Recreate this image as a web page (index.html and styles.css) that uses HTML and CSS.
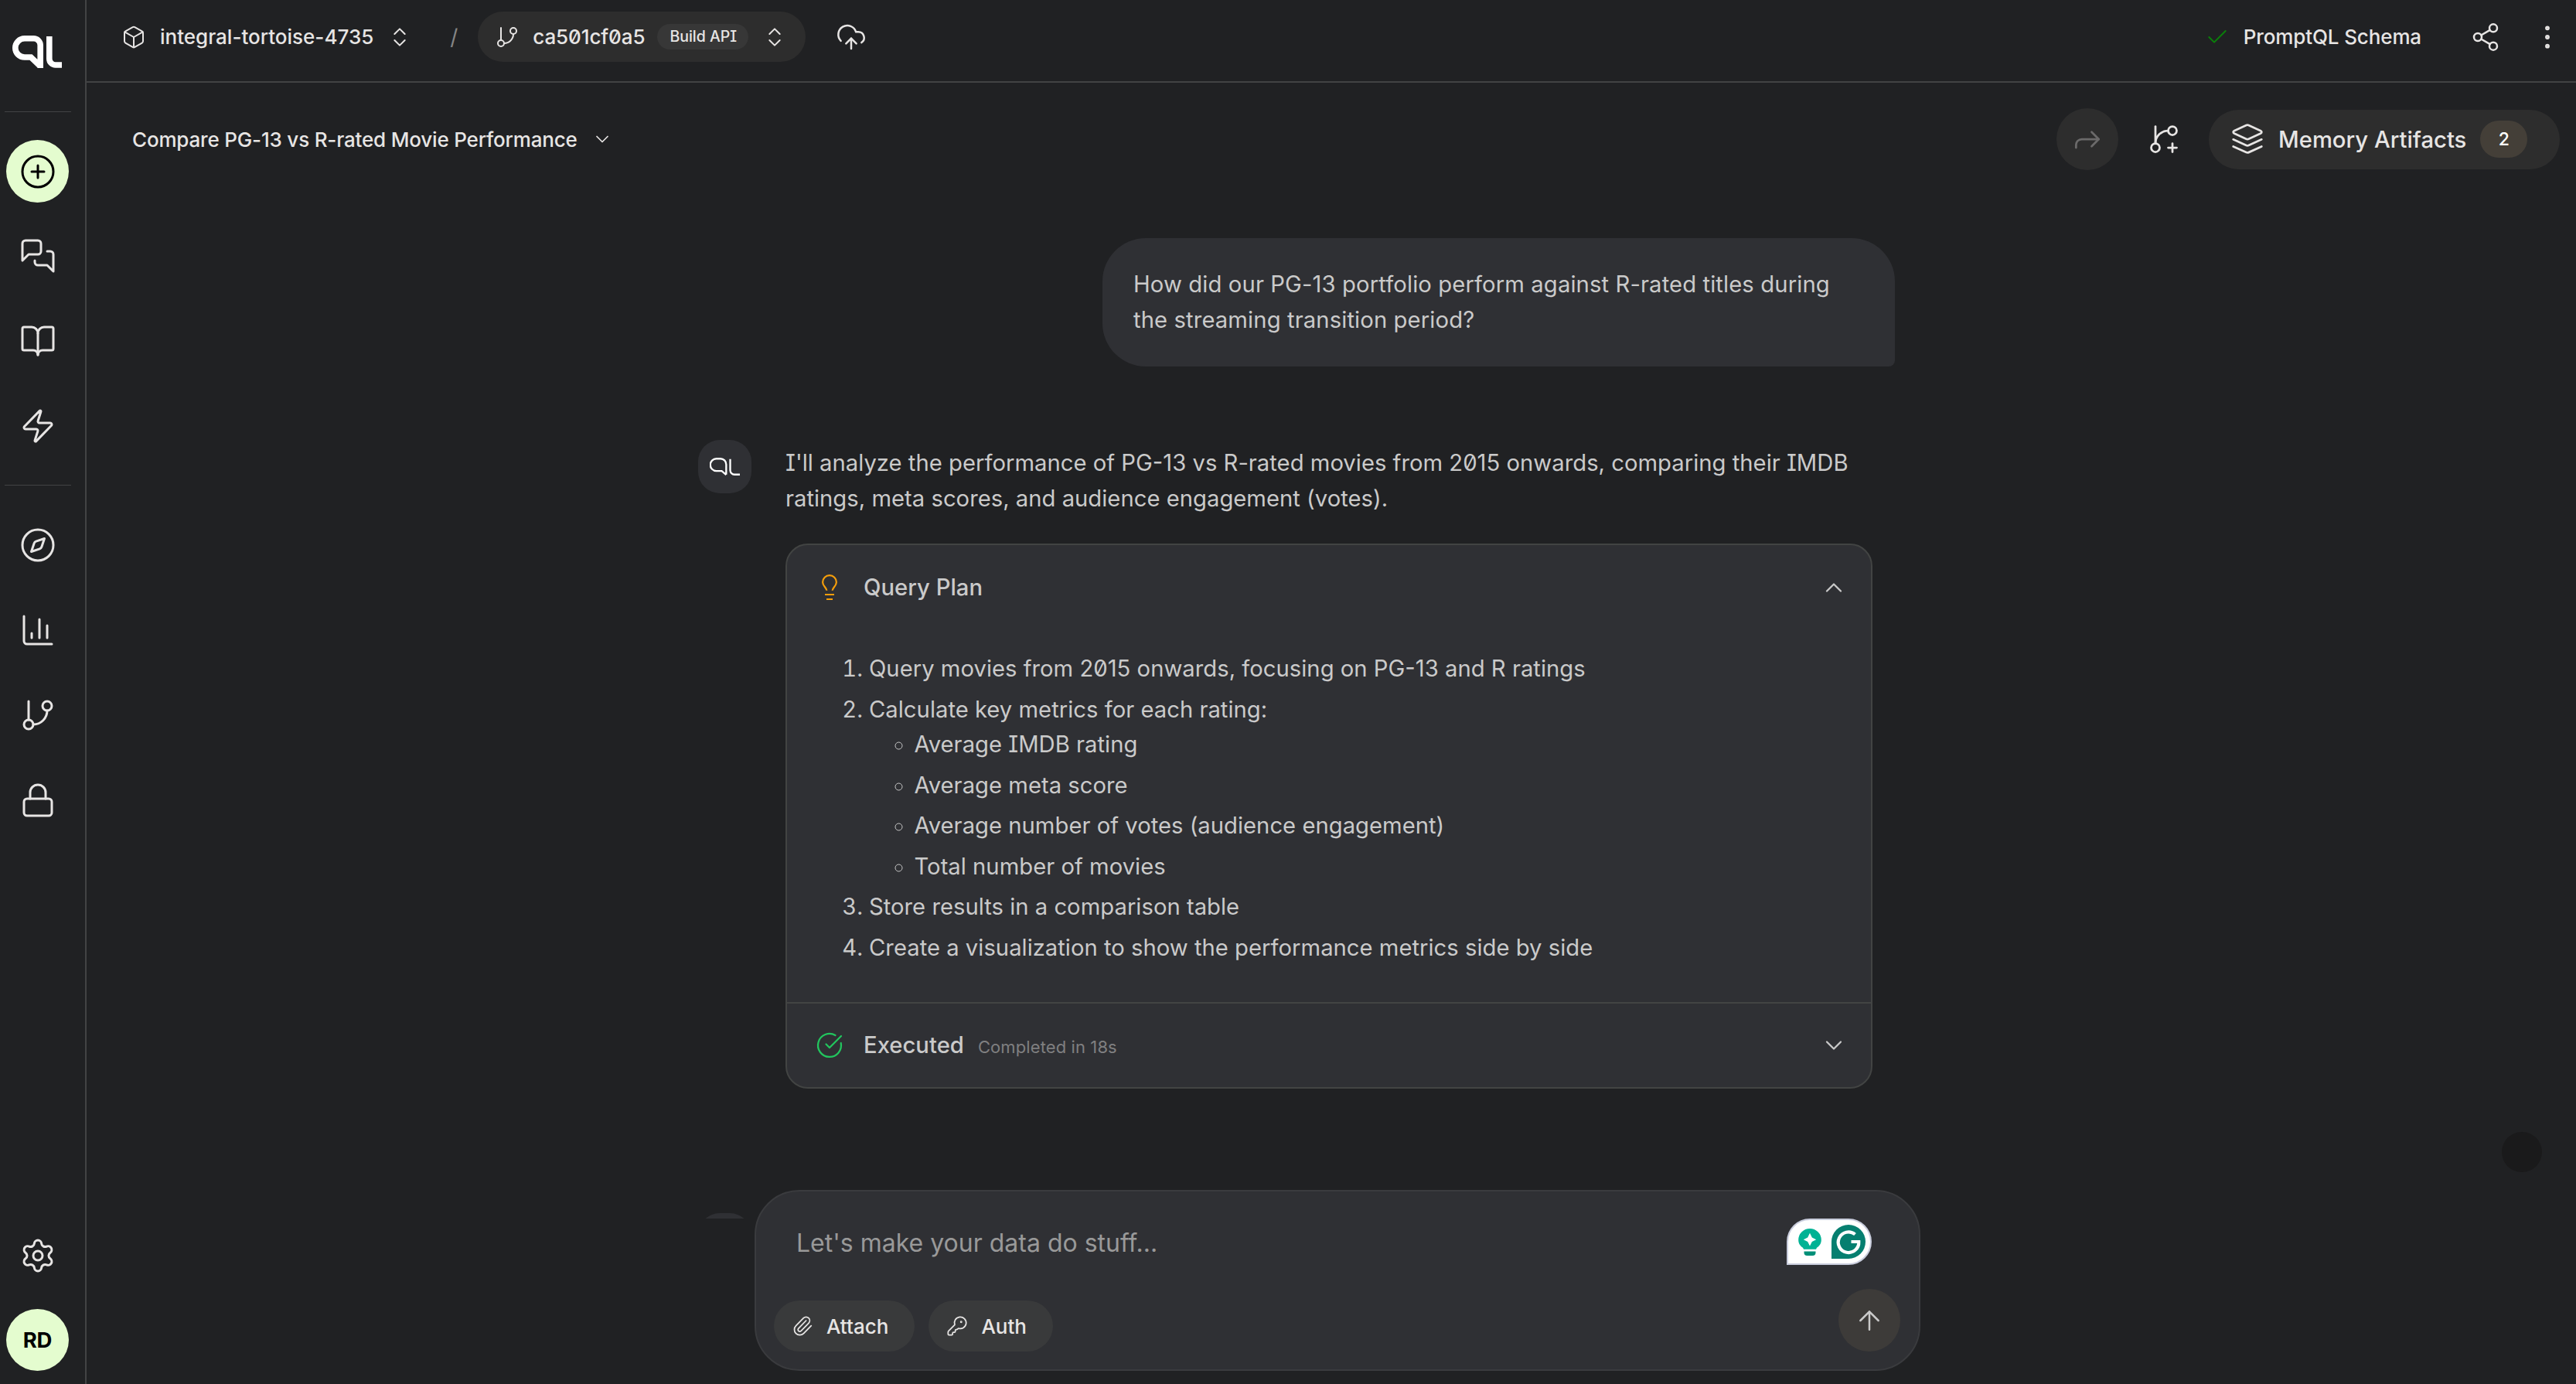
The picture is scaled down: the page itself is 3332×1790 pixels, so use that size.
FILE: index.html
```html
<!doctype html>
<html lang="en">
<head>
  <meta charset="utf-8">
  <meta name="viewport" content="width=device-width, initial-scale=1">
  <title>PromptQL - Compare PG-13 vs R-rated Movie Performance</title>
  <link rel="stylesheet" href="styles.css">
</head>
<body>

<nav class="sidebar">
  <svg class="logo" viewBox="0 0 64 42"><path d="M36.2 42V12.5a8.7 8.7 0 0 0-8.7-8.7H15.9a12.1 12.1 0 0 0 0 24.2H24L37 40.5M47.8 1v29a8 8 0 0 0 8 8H64"/></svg>
  <div class="divider"></div>
  <a class="nav-item new-thread">
    <svg class="icon" viewBox="0 0 24 24"><circle cx="12" cy="12" r="10"/><path d="M8 12h8M12 8v8"/></svg>
  </a>
  <a class="nav-item">
    <svg class="icon" viewBox="0 0 24 24"><path d="M14 9a2 2 0 0 1-2 2H6l-4 4V4a2 2 0 0 1 2-2h8a2 2 0 0 1 2 2z"/><path d="M18 9h2a2 2 0 0 1 2 2v11l-4-4h-6a2 2 0 0 1-2-2v-1"/></svg>
  </a>
  <a class="nav-item">
    <svg class="icon" viewBox="0 0 24 24"><path d="M12 7v14"/><path d="M3 18a1 1 0 0 1-1-1V4a1 1 0 0 1 1-1h5a4 4 0 0 1 4 4 4 4 0 0 1 4-4h5a1 1 0 0 1 1 1v13a1 1 0 0 1-1 1h-6a3 3 0 0 0-3 3 3 3 0 0 0-3-3z"/></svg>
  </a>
  <a class="nav-item">
    <svg class="icon" viewBox="0 0 24 24"><path d="M4 14a1 1 0 0 1-.78-1.63l9.9-10.2a.5.5 0 0 1 .86.46l-1.92 6.02A1 1 0 0 0 13 10h7a1 1 0 0 1 .78 1.63l-9.9 10.2a.5.5 0 0 1-.86-.46l1.92-6.02A1 1 0 0 0 11 14z"/></svg>
  </a>
  <div class="divider divider-mid"></div>
  <a class="nav-item">
    <svg class="icon" viewBox="0 0 24 24"><circle cx="12" cy="12" r="10"/><path d="m16.24 7.76-1.804 5.411a2 2 0 0 1-1.265 1.265L7.76 16.24l1.804-5.411a2 2 0 0 1 1.265-1.265z"/></svg>
  </a>
  <a class="nav-item">
    <svg class="icon" viewBox="0 0 24 24"><path d="M3 3v16a2 2 0 0 0 2 2h16"/><path d="M18 17V9M13 17V5M8 17v-3"/></svg>
  </a>
  <a class="nav-item">
    <svg class="icon" viewBox="0 0 24 24"><path d="M6 3v12"/><circle cx="18" cy="6" r="3"/><circle cx="6" cy="18" r="3"/><path d="M18 9a9 9 0 0 1-9 9"/></svg>
  </a>
  <a class="nav-item">
    <svg class="icon" viewBox="0 0 24 24"><rect width="18" height="11" x="3" y="11" rx="2"/><path d="M7 11V7a5 5 0 0 1 10 0v4"/></svg>
  </a>
  <a class="nav-item settings">
    <svg class="icon" viewBox="0 0 24 24"><path d="M9.671 4.136a2.34 2.34 0 0 1 4.659 0 2.34 2.34 0 0 0 3.319 1.915 2.34 2.34 0 0 1 2.33 4.033 2.34 2.34 0 0 0 0 3.831 2.34 2.34 0 0 1-2.33 4.033 2.34 2.34 0 0 0-3.319 1.915 2.34 2.34 0 0 1-4.659 0 2.34 2.34 0 0 0-3.32-1.915 2.34 2.34 0 0 1-2.33-4.033 2.34 2.34 0 0 0 0-3.831A2.34 2.34 0 0 1 6.35 6.051a2.34 2.34 0 0 0 3.319-1.915"/><circle cx="12" cy="12" r="3"/></svg>
  </a>
  <div class="user-avatar">RD</div>
</nav>

<main class="main">
  <header class="topbar">
    <div class="project">
      <svg class="icon icon-sm" viewBox="0 0 24 24"><path d="M21 8a2 2 0 0 0-1-1.73l-7-4a2 2 0 0 0-2 0l-7 4A2 2 0 0 0 3 8v8a2 2 0 0 0 1 1.73l7 4a2 2 0 0 0 2 0l7-4A2 2 0 0 0 21 16Z"/><path d="m3.3 7 8.7 5 8.7-5M12 22V12"/></svg>
      <span>integral-tortoise-4735</span>
      <svg class="icon icon-sm" viewBox="0 0 24 24"><path d="m7 15 5 5 5-5M7 9l5-5 5 5"/></svg>
    </div>
    <span class="slash">/</span>
    <div class="build">
      <svg class="icon icon-sm" viewBox="0 0 24 24"><path d="M6 3v12"/><circle cx="18" cy="6" r="3"/><circle cx="6" cy="18" r="3"/><path d="M18 9a9 9 0 0 1-9 9"/></svg>
      <span class="build-id">ca501cf0a5</span>
      <span class="tag">Build API</span>
      <svg class="icon icon-sm" viewBox="0 0 24 24"><path d="m7 15 5 5 5-5M7 9l5-5 5 5"/></svg>
    </div>
    <svg class="icon icon-md upload" viewBox="0 0 24 24"><path d="M12 13v8"/><path d="M4 14.899A7 7 0 1 1 15.71 8h1.79a4.5 4.5 0 0 1 2.5 8.242"/><path d="m8 17 4-4 4 4"/></svg>
    <div class="topbar-right">
      <svg class="icon icon-sm schema-ok" viewBox="0 0 24 24"><path d="M20 6 9 17l-5-5"/></svg>
      <span class="schema">PromptQL Schema</span>
      <svg class="icon icon-md share" viewBox="0 0 24 24"><circle cx="18" cy="5" r="3"/><circle cx="6" cy="12" r="3"/><circle cx="18" cy="19" r="3"/><path d="m8.59 13.51 6.83 3.98M15.41 6.51l-6.82 3.98"/></svg>
      <svg class="icon icon-md" viewBox="0 0 24 24"><circle cx="12" cy="12" r="1"/><circle cx="12" cy="5" r="1"/><circle cx="12" cy="19" r="1"/></svg>
    </div>
  </header>

  <div class="thread-bar">
    <span class="thread-title">Compare PG-13 vs R-rated Movie Performance</span>
    <svg class="icon icon-xs" viewBox="0 0 24 24"><path d="m6 9 6 6 6-6"/></svg>
    <div class="thread-actions">
      <button class="round-btn forward">
        <svg class="icon icon-lg" viewBox="0 0 24 24"><path d="m15 17 5-5-5-5"/><path d="M4 18v-2a4 4 0 0 1 4-4h12"/></svg>
      </button>
      <svg class="icon icon-lg fork" viewBox="0 0 24 24"><path d="M6 3v12"/><circle cx="18" cy="6" r="3"/><circle cx="6" cy="18" r="3"/><path d="M15 6a9 9 0 0 0-9 9M18 15v6M21 18h-6"/></svg>
      <button class="artifacts">
        <svg class="icon icon-lg" viewBox="0 0 24 24"><path d="M12.83 2.18a2 2 0 0 0-1.66 0L2.6 6.08a1 1 0 0 0 0 1.83l8.58 3.91a2 2 0 0 0 1.66 0l8.58-3.9a1 1 0 0 0 0-1.83z"/><path d="m22 12.18-9.17 4.16a2 2 0 0 1-1.66 0L2 12.18"/><path d="m22 17.18-9.17 4.16a2 2 0 0 1-1.66 0L2 17.18"/></svg>
        <span>Memory Artifacts</span>
        <span class="count">2</span>
      </button>
    </div>
  </div>

  <section class="chat">
    <div class="user-message">How did our PG-13 portfolio perform against R-rated titles during the streaming transition period?</div>

    <div class="reply">
      <div class="bot-avatar">
        <svg viewBox="0 0 64 37" preserveAspectRatio="none"><path d="M35 35V14A12 12 0 0 0 23 2h-9a11.5 11.5 0 0 0 0 25.500h11.500L35 35.500M43.500 3v23a9 9 0 0 0 9 9H64"/></svg>
      </div>
      <div class="reply-body">
        <p>I'll analyze the performance of PG-13 vs R-rated movies from 2015 onwards, comparing their IMDB ratings, meta scores, and audience engagement (votes).</p>
        <div class="plan">
          <div class="plan-row">
            <svg class="icon icon-plan bulb" viewBox="0 0 36 36"><path d="M14.300 21.700C14.300 18 9.100 16 9.100 11a8.900 8.900 0 0 1 17.800 0c0 5-5.200 7-5.200 10.700M12 27h12M14 33h8"/></svg>
            <span class="plan-title">Query Plan</span>
            <svg class="icon icon-plan chevron" viewBox="0 0 24 24"><path d="m18 15-6-6-6 6"/></svg>
          </div>
          <ol class="steps">
            <li>Query movies from 2015 onwards, focusing on PG-13 and R ratings</li>
            <li>Calculate key metrics for each rating:
              <ul>
                <li>Average IMDB rating</li>
                <li>Average meta score</li>
                <li>Average number of votes (audience engagement)</li>
                <li>Total number of movies</li>
              </ul>
            </li>
            <li>Store results in a comparison table</li>
            <li>Create a visualization to show the performance metrics side by side</li>
          </ol>
          <div class="plan-row executed">
            <svg class="icon icon-plan done" viewBox="0 0 24 24"><path d="M21.801 10A10 10 0 1 1 17 3.335"/><path d="m9 11 3 3L22 4"/></svg>
            <span class="plan-title">Executed</span>
            <span class="plan-time">Completed in 18s</span>
            <svg class="icon icon-plan chevron" viewBox="0 0 24 24"><path d="m6 9 6 6 6-6"/></svg>
          </div>
        </div>
      </div>
    </div>

    <div class="reply">
      <div class="bot-avatar"></div>
    </div>
  </section>

  <div class="composer">
    <div class="placeholder">Let's make your data do stuff...</div>
    <div class="composer-row">
      <button class="pill">
        <svg class="icon icon-xs" viewBox="0 0 24 24"><path d="m16 6-8.414 8.586a2 2 0 0 0 2.829 2.829l8.414-8.586a4 4 0 1 0-5.657-5.657l-8.379 8.551a6 6 0 1 0 8.485 8.485l8.379-8.551"/></svg>
        Attach
      </button>
      <button class="pill">
        <svg class="icon icon-xs" viewBox="0 0 24 24"><path d="M2.586 17.414A2 2 0 0 0 2 18.828V21a1 1 0 0 0 1 1h3a1 1 0 0 0 1-1v-1a1 1 0 0 1 1-1h1a1 1 0 0 0 1-1v-1a1 1 0 0 1 1-1h.172a2 2 0 0 0 1.414-.586l.814-.814a6.500 6.500 0 1 0-4-4z"/><circle cx="16.500" cy="7.500" r=".5"/></svg>
        Auth
      </button>
      <button class="round-btn send">
        <svg class="icon icon-md" viewBox="0 0 24 24"><path d="m5 12 7-7 7 7M12 19V5"/></svg>
      </button>
    </div>

    <!-- writing assistant badge, floats over the input -->
    <div class="assist">
      <svg class="assist-bulb" viewBox="0 0 30 35">
        <path fill="#00b294" d="M15 0a14.800 14.800 0 0 1 14.800 14.800c0 5-3 8.200-5.800 10l-1 2H7l-1-2C3.200 23 .2 19.800.2 14.800A14.800 14.800 0 0 1 15 0z"/>
        <path fill="#008f78" d="M7.500 29.500h15v1.500a4 4 0 0 1-4 4h-7a4 4 0 0 1-4-4z"/>
        <path fill="#fff" d="M15 5.800l2.800 5.700 5.400 2.700-5.400 2.700-2.800 5.700-2.800-5.700-5.400-2.700 5.400-2.700z"/>
      </svg>
      <div class="assist-g">
        <svg viewBox="0 0 44 44"><path d="M30.500 12.500A13.300 13.300 0 1 0 35.300 22H25.500"/></svg>
      </div>
    </div>
  </div>

  <div class="floating-dot"></div>
</main>

</body>
</html>
```

FILE: styles.css
```css
* {
  box-sizing: border-box;
}

body {
  margin: 0;
  display: flex;
  height: 1790px;
  overflow: hidden;
  background: #202123;
  color: #e7e5e4;
  font-family: Inter, "Liberation Sans", sans-serif;
  font-size: 26px;
  font-weight: 500;
  font-feature-settings: "zero", "cv08";
}

button {
  border: 0;
  padding: 0;
  color: inherit;
  font: inherit;
  font-feature-settings: inherit;
}

.icon {
  width: 48px;
  height: 48px;
  flex: none;
  fill: none;
  stroke: currentColor;
  stroke-width: 1.5;
  stroke-linecap: round;
  stroke-linejoin: round;
}

.icon-xs {
  width: 28px;
  height: 28px;
}

.icon-sm {
  width: 32px;
  height: 32px;
}

.icon-plan {
  width: 36px;
  height: 36px;
}

.icon-md {
  width: 40px;
  height: 40px;
}

.icon-lg {
  width: 44px;
  height: 44px;
}

/* sidebar */

.sidebar {
  width: 112px;
  flex: none;
  display: flex;
  flex-direction: column;
  align-items: center;
  padding: 46px 13px 17px 0;
  border-right: 2px solid #424344;
}

.logo {
  width: 64px;
  height: 42px;
  margin-right: 1px;
  flex: none;
  fill: none;
  stroke: #fff;
  stroke-width: 7.6;
}

.divider {
  width: 86px;
  height: 1px;
  flex: none;
  margin: 56px 0 36px;
  background: #424344;
}

.divider-mid {
  margin: 6px 0 37px;
}

.nav-item {
  width: 81px;
  height: 80px;
  flex: none;
  display: flex;
  align-items: center;
  justify-content: center;
  margin-bottom: 30px;
}

.new-thread {
  border-radius: 50%;
  height: 81px;
  margin-bottom: 29px;
  background: #e4fccf;
  color: #000;
}

.settings {
  margin-top: auto;
  margin-bottom: 29px;
}

.user-avatar {
  width: 81px;
  height: 80px;
  flex: none;
  border-radius: 50%;
  display: flex;
  align-items: center;
  justify-content: center;
  background: #e4fccf;
  color: #000;
  font-size: 27.5px;
  font-weight: 700;
  letter-spacing: -0.3px;
}

/* top bar */

.main {
  flex: 1;
  min-width: 0;
  display: flex;
  flex-direction: column;
}

.topbar {
  height: 107px;
  flex: none;
  display: flex;
  align-items: center;
  padding: 0 17px 10px 45px;
  border-bottom: 2px solid #424344;
}

.project {
  display: flex;
  align-items: center;
  gap: 18px;
}

.slash {
  width: 10px;
  margin: 0 26px 0 49px;
  color: #858585;
  font-size: 28px;
  font-weight: 400;
}

.build {
  width: 424px;
  height: 65px;
  display: flex;
  align-items: center;
  padding-left: 22px;
  border-radius: 33px;
  background: #2d2d2d;
}

.build-id {
  margin: 0 16px 0 17px;
  letter-spacing: -0.1px;
}

.tag {
  height: 33px;
  margin-right: 18px;
  padding: 0 15px 0 16px;
  border-radius: 17px;
  background: #373737;
  font-size: 19.5px;
  line-height: 33px;
}

.upload {
  margin-left: 39px;
}

.topbar-right {
  display: flex;
  align-items: center;
  margin-left: auto;
}

.schema-ok {
  color: #0a7f0a;
}

.schema {
  margin: 0 63px 0 18px;
  letter-spacing: -0.13px;
}

.share {
  margin-right: 40px;
}

/* thread bar */

.thread-bar {
  height: 146px;
  flex: none;
  display: flex;
  align-items: center;
  padding: 0 21px 0 59px;
}

.thread-title {
  margin-right: 18px;
  letter-spacing: -0.18px;
}

.thread-actions {
  display: flex;
  align-items: center;
  margin-left: auto;
}

.round-btn {
  width: 80px;
  height: 80px;
  border-radius: 50%;
  display: flex;
  align-items: center;
  justify-content: center;
}

.forward {
  background: #2d2d2d;
  color: #6b6a6a;
}

.fork {
  margin: 0 36px 0 37px;
}

.artifacts {
  width: 454px;
  height: 77px;
  display: flex;
  align-items: center;
  gap: 18px;
  padding-left: 28px;
  border-radius: 39px;
  background: #2d2d2d;
  font-size: 29.25px;
}

.count {
  width: 61px;
  height: 48px;
  border-radius: 24px;
  background: #443f38;
  color: #fff;
  font-size: 23px;
  line-height: 48px;
  text-align: center;
}

/* chat */

.chat {
  width: 1548px;
  height: 1323px;
  flex: none;
  display: flex;
  flex-direction: column;
  margin-left: 791px;
  padding-top: 55px;
  overflow: hidden;
  color: #cacaca;
  font-size: 29.25px;
  font-weight: 400;
  line-height: 45.5px;
}

.user-message {
  width: 1025px;
  flex: none;
  align-self: flex-end;
  padding: 37px 54px 38px 40px;
  border-radius: 56px 56px 8px 56px;
  background: #2f3034;
  letter-spacing: 0.1px;
}

.reply {
  flex: none;
  display: flex;
  gap: 44px;
  margin-top: 95px;
}

.reply + .reply {
  margin-top: 161px;
}

.bot-avatar {
  width: 69px;
  height: 69px;
  flex: none;
  display: flex;
  align-items: center;
  justify-content: center;
  border-radius: 28px;
  background: #2f3034;
}

.bot-avatar svg {
  width: 39px;
  height: 23px;
  fill: none;
  stroke: #fff;
  stroke-width: 3.8;
}

.reply-body {
  width: 1406px;
  padding-top: 7px;
}

.reply-body p {
  margin: 0 0 36px;
}

.plan {
  border: 2px solid #424443;
  border-radius: 29px;
  background: #2f3034;
}

.plan-row {
  height: 110px;
  display: flex;
  align-items: center;
  padding: 0 30px 0 37px;
}

.plan-title {
  margin-left: 26px;
  font-weight: 500;
}

.chevron {
  margin-left: auto;
}

.bulb {
  stroke: #f59e0b;
  stroke-width: 2.2;
  stroke-linecap: butt;
}

.steps {
  margin: 0;
  padding: 27px 0 40px 106px;
}

.steps li {
  margin-bottom: 7.1px;
}

.steps ul {
  padding-left: 58.5px;
}

.executed {
  border-top: 2px solid #424443;
}

.done {
  color: #22c55e;
}

.plan-time {
  margin-left: 18px;
  padding-top: 6px;
  color: #7f7f80;
  font-size: 22px;
  letter-spacing: 0.1px;
}

/* composer */

.composer {
  position: relative;
  width: 1508px;
  height: 234px;
  flex: none;
  display: flex;
  flex-direction: column;
  justify-content: space-between;
  margin: -37px 0 0 864px;
  padding: 38px 24px 23px 23px;
  border: 2px solid #3a3b3e;
  border-radius: 58px;
  background: #2f3034;
}

.placeholder {
  padding-left: 29px;
  color: #999;
  font-size: 32px;
  font-weight: 400;
  line-height: 58px;
}

.composer-row {
  display: flex;
  align-items: flex-end;
  gap: 18px;
}

.pill {
  height: 66px;
  display: flex;
  align-items: center;
  gap: 17px;
  padding: 0 34px 0 23px;
  border-radius: 33px;
  background: #393a3b;
}

.send {
  height: 81px;
  margin-left: auto;
  background: #3d3b39;
  color: #cacaca;
}

.assist {
  position: absolute;
  top: 35px;
  right: 61px;
  width: 110px;
  height: 60px;
  display: flex;
  align-items: center;
  justify-content: space-between;
  padding: 0 6px 0 13px;
  border: 2px solid #c9cddd;
  border-radius: 30px 30px 30px 0;
  background: #fff;
}

.assist-bulb {
  width: 30px;
  height: 35px;
}

.assist-g {
  width: 44px;
  height: 44px;
  border-radius: 22px 22px 22px 0;
  background: #067f70;
}

.assist-g svg {
  display: block;
  fill: none;
  stroke: #fff;
  stroke-width: 4.2;
}

.floating-dot {
  position: fixed;
  right: 44px;
  bottom: 274px;
  width: 52px;
  height: 52px;
  border-radius: 50%;
  background: #1a1a1b;
}
```
